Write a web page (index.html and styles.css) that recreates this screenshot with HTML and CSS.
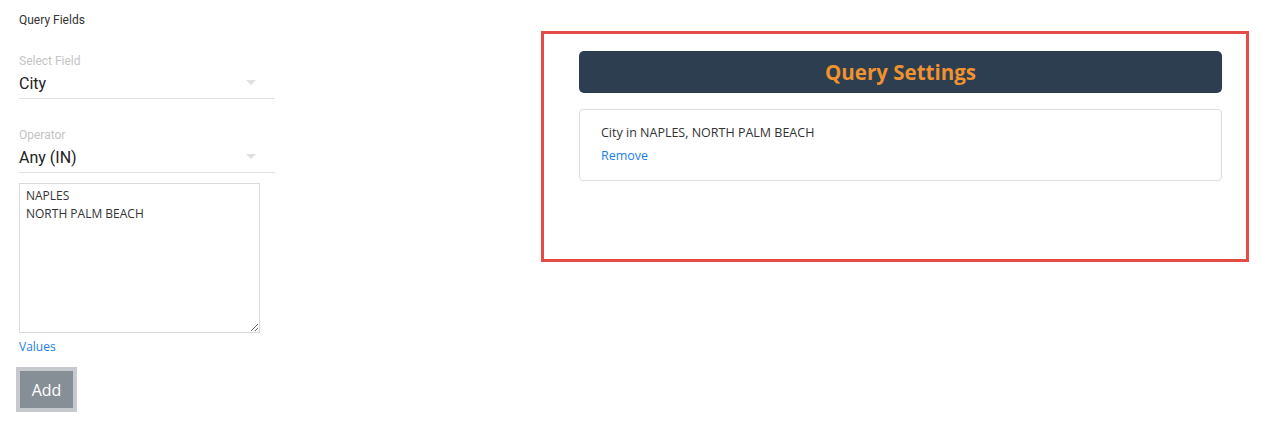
FILE: index.html
```html
<!DOCTYPE html>
<html>
<head>
<meta charset="utf-8">
<link rel="stylesheet" href="styles.css">
</head>
<body>
<div class="page">
  <div class="query-fields">
    <div class="section-title">Query Fields</div>
    <div class="field field-first">
      <div class="field-label">Select Field</div>
      <div class="field-value">City<span class="caret"></span></div>
    </div>
    <div class="field">
      <div class="field-label">Operator</div>
      <div class="field-value">Any (IN)<span class="caret"></span></div>
    </div>
    <textarea class="values-box">NAPLES
NORTH PALM BEACH</textarea>
    <div class="values-label">Values</div>
    <button class="add-btn">Add</button>
  </div>
  <div class="settings-box">
    <div class="settings-header">Query Settings</div>
    <div class="setting-card">
      <div class="setting-text">City in NAPLES, NORTH PALM BEACH</div>
      <a class="remove-link">Remove</a>
    </div>
  </div>
</div>
</body>
</html>
```

FILE: styles.css
```css
html, body {
  margin: 0;
  padding: 0;
  background: #fff;
}
.page {
  display: flex;
  align-items: flex-start;
  font-family: "Open Sans", "Noto Sans", sans-serif;
}
.query-fields {
  width: 256px;
  margin-left: 19px;
  padding-top: 12px;
  display: flex;
  flex-direction: column;
  font-family: Roboto, sans-serif;
}
.section-title {
  font-size: 12px;
  line-height: 16px;
  color: #333;
}
.field {
  margin-top: 28px;
  border-bottom: 1px solid #e0e0e0;
  padding-bottom: 4px;
}
.field-first {
  margin-top: 25px;
}
.field-label {
  font-size: 12px;
  line-height: 16px;
  color: #c4c4c4;
}
.field-value {
  position: relative;
  font-size: 16px;
  line-height: 20px;
  margin-top: 5px;
  color: #222;
}
.caret {
  position: absolute;
  right: 19px;
  top: 6px;
  width: 0;
  height: 0;
  border-left: 5px solid transparent;
  border-right: 5px solid transparent;
  border-top: 5px solid #e0e0e0;
}
.values-box {
  margin-top: 10px;
  width: 241px;
  height: 150px;
  box-sizing: border-box;
  border: 1px solid #d9d9d9;
  padding: 3px 6px;
  font-family: "Open Sans", "Noto Sans", sans-serif;
  font-size: 12px;
  line-height: 18px;
  color: #333;
  resize: both;
  outline: none;
}
.values-label {
  margin-top: 6px;
  font-family: "Open Sans", sans-serif;
  font-size: 12px;
  line-height: 16px;
  color: #1a7fe8;
}
.add-btn {
  margin-top: 12px;
  margin-left: -3px;
  align-self: flex-start;
  width: 61px;
  height: 45px;
  box-sizing: border-box;
  border: 4px solid #c6c9cd;
  background: #868e96;
  color: #fff;
  font-family: "Open Sans", sans-serif;
  font-size: 16px;
  padding: 0;
}
.settings-box {
  margin-left: auto;
  margin-right: 13px;
  margin-top: 31px;
  width: 708px;
  height: 231px;
  box-sizing: border-box;
  border: 3px solid #e34b46;
  padding: 17px 24px 0 35px;
}
.settings-header {
  height: 42px;
  background: #2c3e50;
  border-radius: 5px;
  color: #ef922f;
  font-weight: 700;
  font-size: 20.5px;
  line-height: 42px;
  text-align: center;
}
.setting-card {
  margin-top: 16px;
  height: 72px;
  box-sizing: border-box;
  border: 1px solid #dedede;
  border-radius: 4px;
  padding: 13px 21px 0;
}
.setting-text {
  font-size: 12.5px;
  line-height: 20px;
  color: #333;
}
.remove-link {
  display: block;
  margin-top: 5px;
  font-size: 12.5px;
  line-height: 16px;
  color: #1a7fe8;
}
```
